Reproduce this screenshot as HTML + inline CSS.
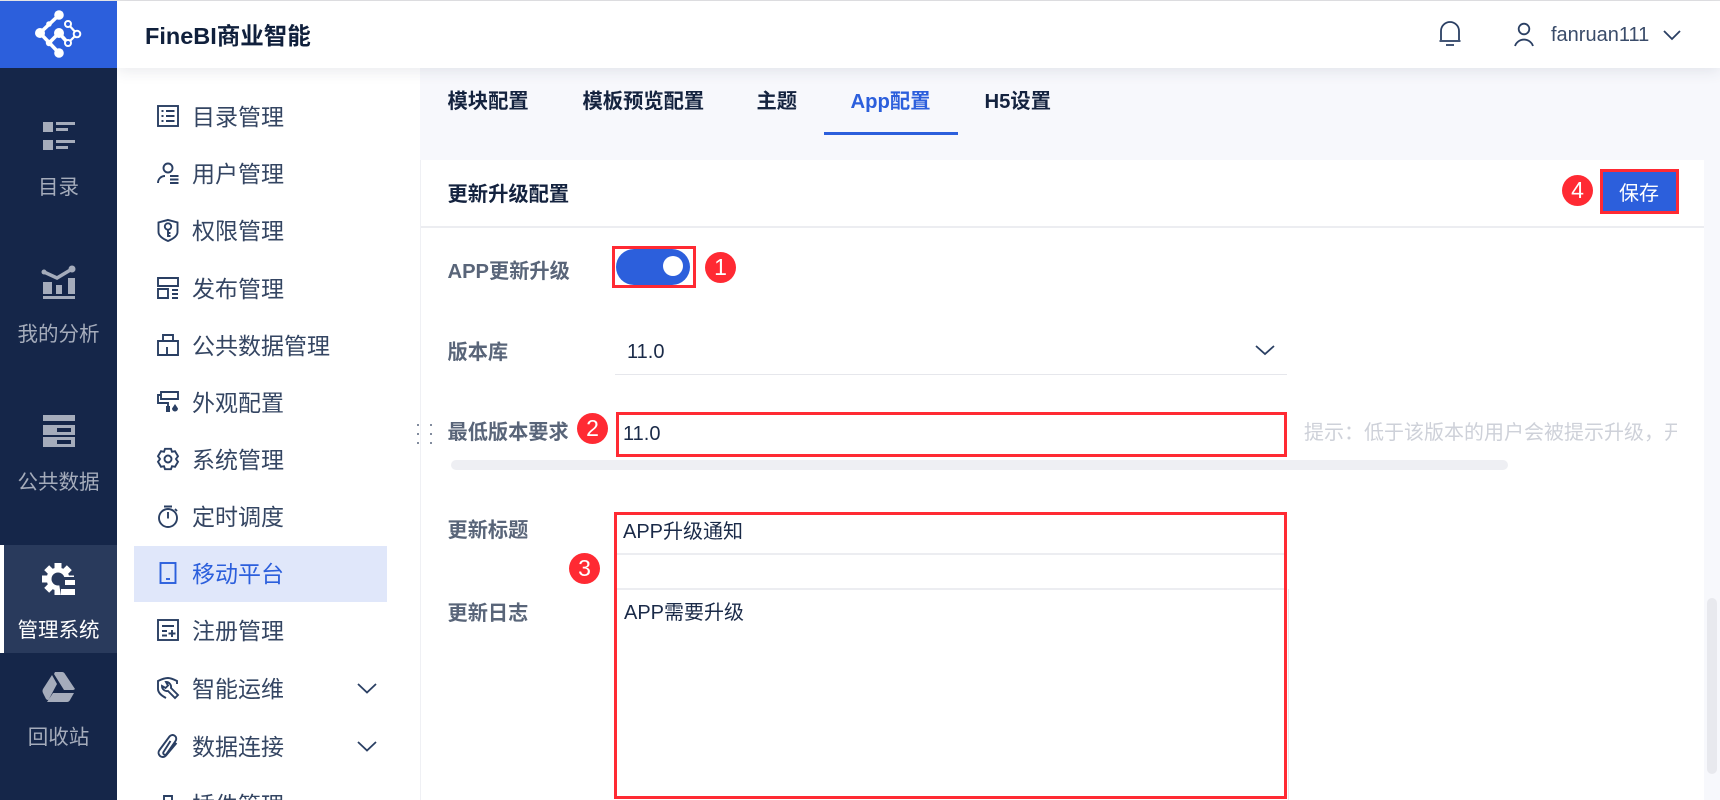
<!DOCTYPE html>
<html lang="zh-CN"><head><meta charset="utf-8"><title>FineBI</title>
<style>
html,body{margin:0;padding:0;width:1720px;height:800px;overflow:hidden;background:#fff}
body{position:relative;font-family:"Liberation Sans","Noto Sans CJK SC",sans-serif;color:#0f2140}
.a{position:absolute}
.t{position:absolute;white-space:nowrap;height:30px;line-height:30px;font-size:20px}
.nav{position:absolute;left:157px;white-space:nowrap;height:34px;line-height:34px;font-size:23px;color:#344562}
.nt{position:absolute;left:35px;top:1px}
.nav svg{position:absolute;left:0;top:6px;width:22px;height:22px;fill:none;stroke:#2a3f63;stroke-width:1.9;overflow:visible}
.sl{position:absolute;left:0;width:117px;text-align:center;font-size:20.5px;height:30px;line-height:30px;color:#a5acbb;white-space:nowrap}
.lab{color:#596579;font-weight:700;font-size:20.2px}
.tab{font-weight:700;color:#14233f;font-size:20.3px}
.b{position:absolute;width:31px;height:31px;border-radius:50%;background:#ff2a33;color:#fff;font-size:23px;line-height:31px;text-align:center}
.rb{position:absolute;box-sizing:border-box;border:3px solid #ff2a33}
</style></head><body>
<div class="a" style="left:0;top:0;width:1720px;height:1px;background:#e3e3e5"></div>
<div class="a" style="left:117px;top:1px;width:1603px;height:67px;background:#fff;box-shadow:0 3px 14px rgba(40,50,80,.10);z-index:3"></div>
<div class="a" style="left:117px;top:68px;width:303px;height:732px;background:#fff"></div>
<div class="a" style="left:420px;top:68px;width:1300px;height:732px;background:#f7f8fc"></div>
<div class="a" style="left:420px;top:160px;width:1px;height:640px;background:#eff0f4"></div>
<div class="a" style="left:421px;top:160px;width:1283px;height:640px;background:#fff"></div>
<div class="a" style="left:0;top:1px;width:117px;height:67px;background:#2c5fdc;z-index:4"></div>
<div class="a" style="left:0;top:68px;width:117px;height:732px;background:#152649;z-index:4"></div>
<div class="a" style="left:4px;top:545px;width:113px;height:108px;background:#293a5c;z-index:4"></div>
<div class="a" style="left:0;top:545px;width:4px;height:108px;background:#fff;z-index:4"></div>

<svg class="a" style="left:0;top:0;z-index:5" width="117" height="68" viewBox="0 0 117 68">
<g stroke="#fff" stroke-width="3.600" fill="none" stroke-linecap="round"><path d="M59 15L40 33L59 53M59 33L49 43M59 33L68 43"/><path stroke-width="2.200" d="M68 24L77 34L68 43"/></g>
<g fill="#fff"><circle cx="59" cy="15" r="4.800"/><circle cx="40" cy="33" r="5"/><circle cx="59" cy="33" r="5"/><circle cx="59" cy="53" r="4.800"/><circle cx="49" cy="43" r="3.200"/><circle cx="49" cy="24" r="2.800"/></g>
<g fill="#2c5fdc" stroke="#fff" stroke-width="2"><circle cx="68" cy="24" r="3"/><circle cx="77" cy="34" r="3.300"/><circle cx="68" cy="43" r="3"/></g>
</svg>

<!-- left rail -->
<svg class="a" style="left:0;top:68px;z-index:5" width="117" height="660" viewBox="0 68 117 660" fill="#a5acbb">
<path d="M43 122h10v10h-10zM56 122h19v3h-19zM56 128h12v3h-12zM43 140h10v10h-10zM56 140h19v3h-19zM56 146h12v3h-12z"/>
<path d="M43 282h9v12h-9zM56 285h6v9h-6zM68 278h7v16h-7zM43 296h32v3h-32z"/>
<path d="M44 272L57 278L72 269" fill="none" stroke="#a5acbb" stroke-width="3.500"/><circle cx="44" cy="272" r="2.500"/><circle cx="72" cy="269" r="3.500"/>
<path d="M43 415h32v6h-32zM43 425h32v10h-32zM43 437h32v10h-32z"/>
<path fill="#152649" d="M57 428h14v4h-14zM57 440h14v4h-14z"/>
<circle cx="58" cy="579" r="11.500" fill="#fff"/>
<g fill="#fff"><rect x="54.500" y="563" width="7" height="32"/><rect x="42" y="575.500" width="32" height="7"/><rect x="54.500" y="563" width="7" height="32" transform="rotate(45 58 579)"/><rect x="54.500" y="563" width="7" height="32" transform="rotate(-45 58 579)"/></g>
<circle cx="58" cy="579" r="6.500" fill="#293a5c"/>
<path fill="#293a5c" d="M58 577h18v19h-15z"/>
<path fill="#fff" d="M65 580h10v5h-10zM61 589h14v6h-14z"/>
<path d="M55 672h7q2 0 3 2l10 15q-1 1-2 1h-9l-10-16zM52 675l5 9-8 15q-1 2-3 0l-3-6q-1-2 0-4zM53 693h21l-4 7q-1 2-3 2h-20z"/>
</svg>
<div class="sl" style="top:173px;z-index:5">目录</div>
<div class="sl" style="top:320px;z-index:5">我的分析</div>
<div class="sl" style="top:468px;z-index:5">公共数据</div>
<div class="sl" style="top:616px;z-index:5;color:#fff">管理系统</div>
<div class="sl" style="top:723px;z-index:5">回收站</div>

<!-- header -->
<div class="t" style="left:145px;top:21px;font-size:23.5px;font-weight:700;color:#10203c;z-index:5">FineBI商业智能</div>
<svg class="a" style="left:1435px;top:18px;z-index:5;fill:none;stroke:#2a3f63;stroke-width:1.800" width="260" height="32" viewBox="1435 18 260 32">
<path d="M1441 40v-9a9 9 0 0 1 18 0v9M1439.500 41h21M1446 45h8"/>
<circle cx="1524" cy="29" r="5.300"/><path d="M1515 46a9.500 9.500 0 0 1 18 0"/>
<path d="M1664 31l8 8 8-8"/></svg>
<div class="t" style="left:1551px;top:20px;color:#3a4c6a;z-index:5">fanruan111</div>

<!-- nav -->
<div class="nav" style="top:99px"><svg viewBox="0 0 22 22"><rect x="1" y="1" width="20" height="20"/><path d="M4.500 6h2M9 6h8.500M4.500 11h2M9 11h8.500M4.500 16h2M9 16h8.500"/></svg><span class="nt">目录管理</span></div>
<div class="nav" style="top:156px"><svg viewBox="0 0 22 22"><circle cx="11" cy="6" r="4.500"/><path d="M1 21c0-4 3-7 7-7M13 14h8.500M13 17.500h8.500M13 21h8.500"/></svg><span class="nt">用户管理</span></div>
<div class="nav" style="top:213px"><svg viewBox="0 0 22 22"><path d="M11 .9L20.500 3.500V13q0 5-9.500 9q-9.500-4-9.500-9V3.500z"/><circle cx="11" cy="7.500" r="3.200"/><path d="M11 11v7M11 14h2.500M11 17h2.500"/></svg><span class="nt">权限管理</span></div>
<div class="nav" style="top:271px"><svg viewBox="0 0 22 22"><path d="M1 1h20v8H1zM1 12h10v9H1zM15 13h6M15 17h6M15 21h6"/></svg><span class="nt">发布管理</span></div>
<div class="nav" style="top:328px"><svg viewBox="0 0 22 22"><path d="M1 7h20v14H1zM6 7V1h10v6M10 13v8"/></svg><span class="nt">公共数据管理</span></div>
<div class="nav" style="top:385px"><svg viewBox="0 0 22 22"><path d="M4 1h17v7H4zM4 4H1v8h10v4"/><path fill="#2a3f63" stroke="none" d="M9 15h4v6H9zM18 13l3 4.500a3 3 0 0 1-6 0z"/></svg><span class="nt">外观配置</span></div>
<div class="nav" style="top:442px"><svg viewBox="0 0 22 22"><path d="M8 .8h6l1 3 3-.6 3 5-2 2.800 2 2.800-3 5-3-.6-1 3H8l-1-3-3 .6-3-5 2-2.800-2-2.800 3-5 3 .6z"/><circle cx="11" cy="11" r="3.500"/></svg><span class="nt">系统管理</span></div>
<div class="nav" style="top:499px"><svg viewBox="0 0 22 22"><circle cx="11" cy="13" r="9"/><path d="M7 1.500h8M11 7v6.500M18 4l2 2"/></svg><span class="nt">定时调度</span></div>
<div class="a" style="left:134px;top:546px;width:253px;height:56px;background:#e0e7fa"></div>
<div class="nav" style="top:556px;color:#2c5fdc"><svg viewBox="0 0 22 22" style="stroke:#2c5fdc"><rect x="3.500" y="1" width="15" height="20"/><path d="M9 17h4"/></svg><span class="nt">移动平台</span></div>
<div class="nav" style="top:613px"><svg viewBox="0 0 22 22"><rect x="1" y="1" width="20" height="20"/><path d="M5 7h12M5 12h5M5 16.500h5M15 11v7M11.500 14.500h7"/></svg><span class="nt">注册管理</span></div>
<div class="nav" style="top:671px"><svg viewBox="0 0 22 22"><path d="M20 7V4Q14 1 11 1Q7 1 1 4V12Q1 17 9 21"/><path d="M9 5a5 5 0 0 1 5 6l7 7-3 3-7-7a5 5 0 0 1-6-5l3.500 2 2.500-2.500z"/></svg><span class="nt">智能运维</span></div>
<div class="nav" style="top:729px"><svg viewBox="0 0 22 22"><path d="M13.500 6L6.500 17a1.800 1.800 0 0 0 3 2L18.500 6a3.700 3.700 0 0 0-6-4.500L2.500 15a4 4 0 0 0 6.500 5.500L19.500 8"/></svg><span class="nt">数据连接</span></div>
<div class="nav" style="top:787px"><svg viewBox="0 0 22 22"><path d="M1 21V8h6V3h8v5h6v13z"/></svg><span class="nt">插件管理</span></div>
<svg class="a" style="left:355px;top:680px;fill:none;stroke:#2a3f63;stroke-width:1.800" width="24" height="72" viewBox="0 0 24 72"><path d="M3 4l9 8.500 9-8.500M3 62l9 8.500 9-8.500"/></svg>

<!-- tabs -->
<div class="t tab" style="left:447.500px;top:87px">模块配置</div>
<div class="t tab" style="left:582.500px;top:87px">模板预览配置</div>
<div class="t tab" style="left:756.500px;top:87px">主题</div>
<div class="t tab" style="left:850.500px;top:87px;color:#2c5fdc">App配置</div>
<div class="t tab" style="left:984.500px;top:87px">H5设置</div>
<div class="a" style="left:824px;top:132px;width:134px;height:3px;background:#2c5fdc"></div>

<!-- card -->
<div class="t tab" style="left:447.500px;top:180px">更新升级配置</div>
<div class="a" style="left:421px;top:226px;width:1283px;height:2px;background:#ecedf1"></div>
<div class="a" style="left:1603px;top:172px;width:73px;height:40px;background:#2c5fdc"></div>
<div class="rb" style="left:1600px;top:169px;width:79px;height:45px"></div>
<div class="t" style="left:1619px;top:179px;color:#fff">保存</div>
<div class="b" style="left:1562px;top:175px">4</div>

<div class="t lab" style="left:447.500px;top:257px">APP更新升级</div>
<div class="a" style="left:616px;top:249px;width:74px;height:36px;border-radius:18px;background:#2c5fdc"></div>
<div class="a" style="left:663px;top:256px;width:20px;height:20px;border-radius:50%;background:#fff"></div>
<div class="rb" style="left:612px;top:246px;width:84px;height:42px"></div>
<div class="b" style="left:705px;top:252px">1</div>

<div class="t lab" style="left:447.500px;top:338px">版本库</div>
<div class="t" style="left:627px;top:337px;color:#1a2a48">11.0</div>
<div class="a" style="left:615px;top:374px;width:672px;height:1px;background:#e6e7ec"></div>
<svg class="a" style="left:1254px;top:343px;fill:none;stroke:#2a3f63;stroke-width:1.800" width="22" height="14" viewBox="0 0 22 14"><path d="M2 3l9 8 9-8"/></svg>

<svg class="a" style="left:415px;top:422px" width="20" height="24" fill="#5b6880"><circle cx="3" cy="3" r="1"/><circle cx="16" cy="3" r="1"/><circle cx="3" cy="12" r="1"/><circle cx="16" cy="12" r="1"/><circle cx="3" cy="21" r="1"/><circle cx="16" cy="21" r="1"/></svg>
<div class="t lab" style="left:447.500px;top:418px">最低版本要求</div>
<div class="b" style="left:577px;top:413px">2</div>
<div class="rb" style="left:616px;top:412px;width:671px;height:45px"></div>
<div class="t" style="left:623px;top:419px;color:#1a2a48">11.0</div>
<div class="a" style="left:1304px;top:418px;width:373px;height:30px;overflow:hidden"><div class="t" style="left:0;top:0;color:#ced1d9">提示：低于该版本的用户会被提示升级，开启后将提示</div></div>
<div class="a" style="left:451px;top:460px;width:1057px;height:10px;border-radius:5px;background:#eeeff3"></div>

<div class="t lab" style="left:447.500px;top:516px">更新标题</div>
<div class="t lab" style="left:447.500px;top:599px">更新日志</div>
<div class="b" style="left:569px;top:553px">3</div>
<div class="a" style="left:617px;top:553px;width:667px;height:2px;background:#ecedf1"></div>
<div class="a" style="left:617px;top:588px;width:667px;height:2px;background:#ecedf1"></div>
<div class="a" style="left:1288px;top:589px;width:1px;height:211px;background:#e6e7ec"></div>
<div class="rb" style="left:614px;top:512px;width:673px;height:287px"></div>
<div class="t" style="left:623px;top:517px;color:#1a2a48">APP升级通知</div>
<div class="t" style="left:624px;top:598px;color:#1a2a48">APP需要升级</div>

<div class="a" style="left:1707px;top:598px;width:10px;height:176px;border-radius:5px;background:#e8e9ee"></div>
</body></html>
